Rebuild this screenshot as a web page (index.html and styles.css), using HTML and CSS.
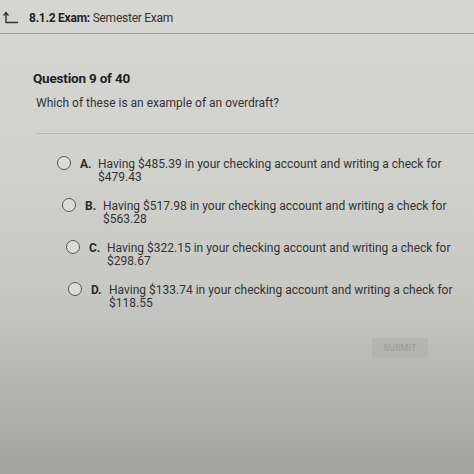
FILE: index.html
```html
<!DOCTYPE html>
<html>
<head>
<meta charset="utf-8">
<link rel="stylesheet" href="styles.css">
</head>
<body>
<div class="page">
  <header class="topbar">
    <svg class="back" width="16" height="14" viewBox="0 0 16 14">
      <path d="M3 13 V3 M0.5 5.5 L3 2.5 L5.5 5.5 M3 12.5 H15" fill="none" stroke="#333" stroke-width="1.4"/>
    </svg>
    <span class="crumb"><b>8.1.2 Exam:</b> Semester Exam</span>
  </header>
  <main class="content">
    <h1 class="qnum">Question 9 of 40</h1>
    <p class="prompt">Which of these is an example of an overdraft?</p>
    <hr class="sep">
    <ul class="options">
      <li class="opt opt-a"><span class="radio"></span><span class="letter">A.</span><span class="text">Having $485.39 in your checking account and writing a check for $479.43</span></li>
      <li class="opt opt-b"><span class="radio"></span><span class="letter">B.</span><span class="text">Having $517.98 in your checking account and writing a check for $563.28</span></li>
      <li class="opt opt-c"><span class="radio"></span><span class="letter">C.</span><span class="text">Having $322.15 in your checking account and writing a check for $298.67</span></li>
      <li class="opt opt-d"><span class="radio"></span><span class="letter">D.</span><span class="text">Having $133.74 in your checking account and writing a check for $118.55</span></li>
    </ul>
    <div class="actions"><button class="submit">SUBMIT</button></div>
  </main>
</div>
</body>
</html>
```
FILE: styles.css
```css
html, body {
  margin: 0;
  padding: 0;
}
body {
  width: 474px;
  height: 474px;
  overflow: hidden;
  font-family: Roboto, "Liberation Sans", sans-serif;
  color: #2c2c2c;
  background: linear-gradient(180deg, #d5d6d2 0%, #d2d3cf 30%, #c8c9c5 60%, #b4b5b1 82%, #a3a4a0 100%);
}
.page {
  display: flex;
  flex-direction: column;
}
.topbar {
  height: 34px;
  border-bottom: 1.5px solid #9d9e9a;
  display: flex;
  align-items: center;
  gap: 10px;
  padding-left: 3px;
  box-sizing: border-box;
}
.back {
  margin-top: 1px;
}
.crumb {
  font-size: 12px;
  letter-spacing: -0.25px;
  color: #333;
  margin-top: 2px;
}
.crumb b {
  font-weight: 700;
  color: #222;
}
.content {
  padding-left: 33px;
}
.qnum {
  margin: 35px 0 0 0;
  font-size: 13.5px;
  font-weight: 700;
  color: #222;
  line-height: 18px;
  letter-spacing: -0.2px;
}
.prompt {
  margin: 8px 0 0 3px;
  font-size: 12px;
  line-height: 16px;
  color: #333;
}
.sep {
  margin: 22px 0 0 3px;
  border: 0;
  border-top: 1px solid #b8b9b5;
  height: 0;
}
.options {
  list-style: none;
  margin: 24px 0 0 0;
  padding: 0;
  display: flex;
  flex-direction: column;
  gap: 16px;
}
.opt {
  display: flex;
  align-items: flex-start;
  font-size: 12px;
  line-height: 13px;
  color: #333;
}
.opt-a { padding-left: 24px; }
.opt-b { padding-left: 29px; }
.opt-c { padding-left: 33px; }
.opt-d { padding-left: 35px; }
.radio {
  width: 12px;
  height: 12px;
  border: 1.6px solid #555;
  border-radius: 50%;
  flex: none;
  margin-top: -2px;
  background: #dcdcd8;
}
.letter {
  font-weight: 700;
  margin-left: 9px;
  width: 18px;
  flex: none;
  color: #2a2a2a;
}
.text {
  width: 360px;
}
.actions {
  display: flex;
  justify-content: flex-end;
  padding-right: 46px;
  margin-top: 28px;
}
.submit {
  width: 56px;
  height: 20px;
  border: 0;
  background: #b4b5b1;
  color: #a0a19d;
  font-family: Roboto, "Liberation Sans", sans-serif;
  font-weight: 700;
  font-size: 9px;
  padding: 0;
}
```
